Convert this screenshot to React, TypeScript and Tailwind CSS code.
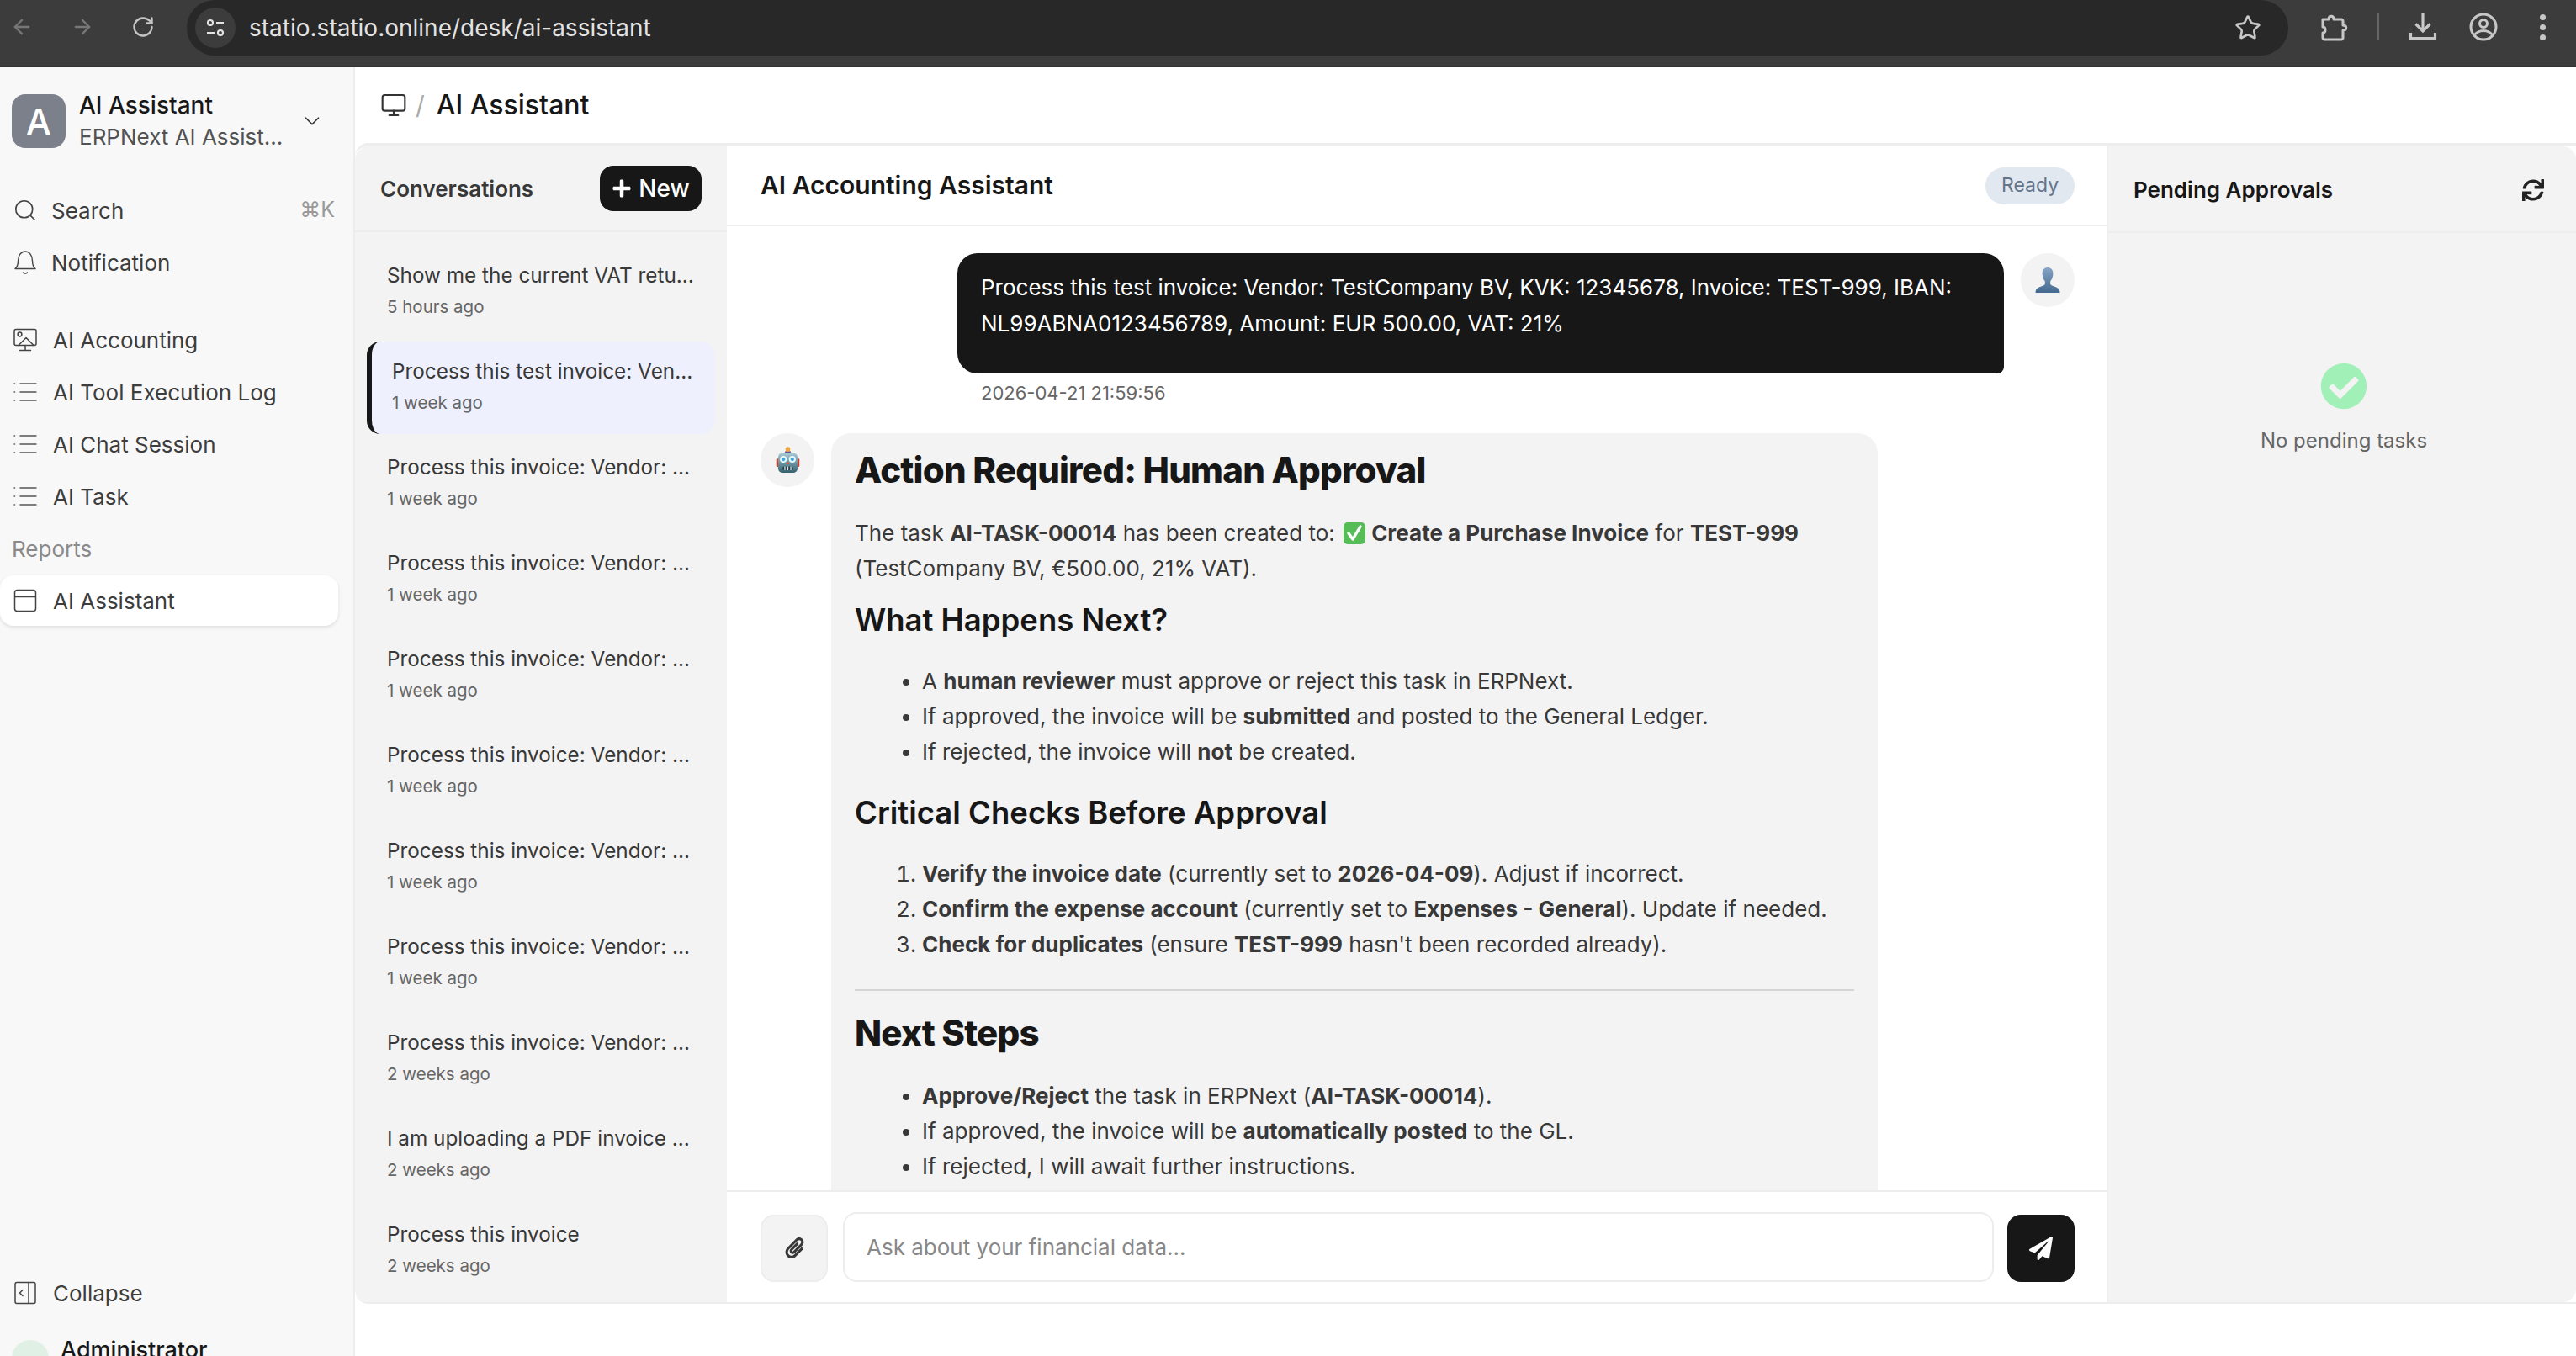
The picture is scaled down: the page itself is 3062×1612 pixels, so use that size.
import React from "react";
import { ArrowLeft, ArrowRight, RotateCw, Star, Search, ChevronDown, Monitor } from "lucide-react";
import { FaPaperclip, FaPaperPlane, FaPlus, FaSync, FaCheckCircle } from "react-icons/fa";

const conversations = [
  { title: "Show me the current VAT return status", time: "5 hours ago" },
  { title: "Process this test invoice: Vendor: TestCompany", time: "1 week ago", active: true },
  { title: "Process this invoice: Vendor: Manufacturing BV", time: "1 week ago" },
  { title: "Process this invoice: Vendor: Manufacturing BV", time: "1 week ago" },
  { title: "Process this invoice: Vendor: Manufacturing BV", time: "1 week ago" },
  { title: "Process this invoice: Vendor: Manufacturing BV", time: "1 week ago" },
  { title: "Process this invoice: Vendor: Manufacturing BV", time: "1 week ago" },
  { title: "Process this invoice: Vendor: Manufacturing BV", time: "1 week ago" },
  { title: "Process this invoice: Vendor: Manufacturing BV", time: "2 weeks ago" },
  { title: "I am uploading a PDF invoice with details", time: "2 weeks ago" },
  { title: "Process this invoice", time: "2 weeks ago" },
];

function ListIcon() {
  return (
    <svg width="30" height="28" viewBox="0 0 30 28" fill="none" stroke="#555" strokeWidth="1.4" strokeLinecap="round">
      <path d="M9 4h19M9 14h19M9 24h19M2 4h.6M2 14h.6M2 24h.6" />
    </svg>
  );
}

function BellIcon() {
  return (
    <svg width="28" height="30" viewBox="0 0 28 30" fill="none" stroke="#444" strokeWidth="1.4" strokeLinecap="round" strokeLinejoin="round">
      <path d="M2 22.500c2.500-2 3.500-4.500 3.500-9.500C5.500 6.500 9 2 14 2s8.500 4.500 8.500 11c0 5 1 7.500 3.500 9.500z" />
      <path d="M11.500 27c1.200 1.400 3.800 1.400 5 0" />
    </svg>
  );
}

function AccountingIcon() {
  return (
    <svg width="30" height="28" viewBox="0 0 30 28" fill="none" stroke="#444" strokeWidth="1.5" strokeLinejoin="round" strokeLinecap="round">
      <rect x="2" y="1.500" width="26" height="19" rx="2" />
      <circle cx="8.500" cy="7.500" r="2.400" />
      <path d="M7 20.500l9-9 9 9M15 20.500v5.500M8.500 26.500h13" />
    </svg>
  );
}

function ReportIcon() {
  return (
    <svg width="28" height="28" viewBox="0 0 28 28" fill="none" stroke="#444" strokeWidth="1.5">
      <rect x="1.500" y="1.500" width="25" height="25" rx="3" />
      <path d="M1.500 9.500h25" />
    </svg>
  );
}

function CollapseIcon() {
  return (
    <svg width="28" height="28" viewBox="0 0 28 28" fill="none" stroke="#444" strokeWidth="1.5" strokeLinecap="round" strokeLinejoin="round">
      <rect x="2" y="1.500" width="24" height="25" rx="2" />
      <path d="M18 1.500v25M11 10.500l-3.500 3.500 3.500 3.500" />
    </svg>
  );
}

function ExtensionIcon() {
  return (
    <svg width="34" height="36" viewBox="0 0 34 36" fill="none" stroke="#c7c7c7" strokeWidth="3" strokeLinejoin="round">
      <path d="M4 8h7c0-5 6-5 6 0h9c1 0 2 1 2 2v5c5 0 5 6 0 6v9c0 1-1 2-2 2H6c-1 0-2-1-2-2v-6c4 0 4-7 0-7z" />
    </svg>
  );
}

function DownloadIcon() {
  return (
    <svg width="34" height="34" viewBox="0 0 34 34" fill="none" stroke="#c7c7c7" strokeWidth="3.200">
      <path d="M17 1v20M8.500 13.500l8.500 8.500 8.500-8.500M2.500 24v6.500h29V24" />
    </svg>
  );
}

function ProfileIcon() {
  return (
    <svg width="34" height="34" viewBox="0 0 34 34" fill="none" stroke="#c7c7c7" strokeWidth="3">
      <circle cx="17" cy="17" r="15" />
      <circle cx="17" cy="13" r="4.500" />
      <path d="M6 27c3-4 7-5.500 11-5.500s8 1.500 11 5.500" />
    </svg>
  );
}

function UserBust() {
  return (
    <svg width="32" height="32" viewBox="0 0 32 32">
      <defs>
        <linearGradient id="bust" x1="0" y1="0" x2="0" y2="1">
          <stop offset="0" stopColor="#86a5c6" />
          <stop offset="1" stopColor="#44688f" />
        </linearGradient>
      </defs>
      <path fill="url(#bust)" d="M16 1c4 0 6.400 3 6.400 7.200 0 4-1.600 7.400-3.200 9v3c0 1.200 1 2 2.600 2.600 3.600 1.400 7.200 2.400 8.200 5.200.3 1 .5 2 .5 3H1.500c0-1 .2-2 .5-3 1-2.800 4.600-3.800 8.200-5.200 1.600-.6 2.600-1.400 2.600-2.600v-3c-1.600-1.600-3.200-5-3.200-9C9.600 4 12 1 16 1z" />
    </svg>
  );
}

function RobotFace() {
  return (
    <svg width="29" height="32" viewBox="0 0 32 36">
      <defs>
        <linearGradient id="head" x1="0" y1="0" x2="0" y2="1">
          <stop offset="0" stopColor="#a9ccd8" />
          <stop offset="1" stopColor="#33606f" />
        </linearGradient>
      </defs>
      <rect x="12" y="6" width="8" height="4" rx="1.500" fill="#6b4f9a" />
      <circle cx="16" cy="3.500" r="3.200" fill="#f0a63c" />
      <rect x="0.500" y="16" width="4" height="11" rx="1.500" fill="#c8402f" />
      <rect x="27.500" y="16" width="4" height="11" rx="1.500" fill="#c8402f" />
      <rect x="3" y="8" width="26" height="27" rx="6" fill="url(#head)" />
      <circle cx="10" cy="17" r="4.600" fill="#e6f6fb" />
      <circle cx="22" cy="17" r="4.600" fill="#e6f6fb" />
      <circle cx="10" cy="17" r="2.400" fill="#38a6d8" />
      <circle cx="22" cy="17" r="2.400" fill="#38a6d8" />
      <path d="M16 19l-2 4.500h4z" fill="#d9574a" />
      <rect x="9" y="26.500" width="14" height="5" rx="2" fill="#27414c" />
      <path d="M12 26.500v5M16 26.500v5M20 26.500v5" stroke="#dfe8ea" strokeWidth="1.400" />
    </svg>
  );
}

function CheckEmoji() {
  return (
    <svg width="26" height="28" viewBox="0 0 26 28" className="inline-block align-[-5px] ml-[3px] mr-[7px]">
      <rect x="0" y="1" width="26" height="26" rx="5" fill="#56bd56" />
      <path d="M6 14l5 7 9-15" fill="none" stroke="#fff" strokeWidth="3.400" strokeLinecap="round" strokeLinejoin="round" />
    </svg>
  );
}

function NavItem({ icon, label, trailing, tight }: { icon: React.ReactNode; label: string; trailing?: string; tight?: boolean }) {
  return (
    <div className="h-[60px] mb-[2px] flex items-center pl-[15px] pr-[22px]">
      <div className="w-[30px] flex justify-center shrink-0">{icon}</div>
      <span className={(tight ? "ml-[16px]" : "ml-[18px]") + " flex-1 text-[26px] text-[#3d3d3d]"}>{label}</span>
      {trailing && <span className="text-[25px] text-[#999]">{trailing}</span>}
    </div>
  );
}

function Sidebar() {
  return (
    <aside className="w-[422px] shrink-0 bg-[#f8f8f8] border-r-2 border-[#ededed] flex flex-col h-full relative">
      <div className="flex items-center pl-[14px] mt-[27px]">
        <div className="w-[64px] h-[64px] rounded-[16px] bg-[#7c808a] flex items-center justify-center text-white text-[42px] font-medium">A</div>
        <div className="ml-[16px] flex-1 leading-none">
          <div className="text-[28px] font-medium text-[#171717] leading-[36px]">AI Assistant</div>
          <div className="text-[26px] text-[#525252] leading-[36px] mt-[2px]">ERPNext AI Assist...</div>
        </div>
        <ChevronDown size={30} strokeWidth={1.4} className="text-[#333] mr-[34px]" />
      </div>
      <div className="mt-[39px]">
        <NavItem icon={<Search size={30} strokeWidth={1.3} className="text-[#444]" />} label="Search" trailing="⌘K" tight />
        <NavItem icon={<BellIcon />} label="Notification" tight />
      </div>
      <div className="mt-[30px]">
        <NavItem icon={<AccountingIcon />} label="AI Accounting" />
        <NavItem icon={<ListIcon />} label="AI Tool Execution Log" />
        <NavItem icon={<ListIcon />} label="AI Chat Session" />
        <NavItem icon={<ListIcon />} label="AI Task" />
      </div>
      <div className="h-[60px] flex items-center pl-[14px] text-[26px] text-[#8a8a8a]">Reports</div>
      <div className="h-[60px] w-[402px] mt-[2px] bg-white rounded-[16px] shadow-[0_2px_4px_rgba(0,0,0,0.1)] flex items-center pl-[15px]">
        <div className="w-[30px] flex justify-center"><ReportIcon /></div>
        <span className="ml-[18px] text-[26px] text-[#3d3d3d]">AI Assistant</span>
      </div>
      <div className="mt-auto">
        <NavItem icon={<CollapseIcon />} label="Collapse" />
        <div className="h-[43px] relative overflow-hidden">
          <div className="absolute left-[14px] top-[24px] w-[44px] h-[44px] rounded-full bg-[#e0f0e4]" />
          <span className="absolute left-[72px] top-[18px] text-[27px] font-medium text-[#171717] leading-[36px]">Administrator</span>
        </div>
      </div>
    </aside>
  );
}

function Chrome() {
  return (
    <div className="h-[80px] shrink-0 bg-[#3c3c3c] border-b-2 border-[#333] flex text-[#c7c7c7]">
      <div className="flex items-start pt-[18px] w-[222px] shrink-0 pl-[12px] gap-[44px]">
        <ArrowLeft size={28} strokeWidth={2} className="text-[#777]" />
        <ArrowRight size={28} strokeWidth={2} className="text-[#777]" />
        <RotateCw size={28} strokeWidth={2} />
      </div>
      <div className="h-[66px] w-[2498px] shrink-0 bg-[#282828] rounded-[33px] flex items-center pl-[10px] pr-[32px]">
        <div className="w-[48px] h-[48px] rounded-full bg-[#3c3c3c] flex items-center justify-center">
          <svg width="24" height="24" viewBox="0 0 24 24" fill="none" stroke="#e3e3e3" strokeWidth="2.200">
            <circle cx="6" cy="6" r="3" /><path d="M13 6h9M2 18h9" /><circle cx="18" cy="18" r="3" />
          </svg>
        </div>
        <span className="ml-[16px] text-[28px] text-[#e3e3e3] flex-1">statio.statio.online/desk/ai-assistant</span>
        <Star size={32} strokeWidth={2} />
      </div>
      <div className="flex items-start pt-[15px] flex-1 pl-[37px]">
        <ExtensionIcon />
        <div className="w-[2px] h-[32px] bg-[#666] ml-[35px] mt-[1px]" />
        <div className="ml-[35px]"><DownloadIcon /></div>
        <div className="ml-[38px]"><ProfileIcon /></div>
        <div className="ml-[50px] mt-[2px] flex flex-col gap-[5px]">
          <div className="w-[7px] h-[7px] rounded-full bg-[#c7c7c7]" />
          <div className="w-[7px] h-[7px] rounded-full bg-[#c7c7c7]" />
          <div className="w-[7px] h-[7px] rounded-full bg-[#c7c7c7]" />
        </div>
      </div>
    </div>
  );
}

function ConversationList() {
  return (
    <div className="w-[442px] shrink-0 bg-[#f3f3f3] rounded-l-[16px] flex flex-col overflow-hidden">
      <div className="h-[102px] shrink-0 border-b-2 border-[#ededed] flex items-center justify-between pl-[30px] pr-[30px]">
        <span className="text-[26px] font-semibold text-[#383838]">Conversations</span>
        <button className="w-[121px] h-[54px] rounded-[16px] bg-[#171717] text-white text-[28px] font-medium flex items-center justify-center gap-[8px]">
          <FaPlus size={24} />
          New
        </button>
      </div>
      <div className="pt-[16px] px-[14px]">
        {conversations.map((c, i) => (
          <div
            key={i}
            className={
              "h-[110px] mb-[4px] rounded-[16px] flex flex-col justify-center pb-[7px] " +
              (c.active ? "bg-[#eef0fd] border-l-[6px] border-[#171717] pl-[24px] pr-[20px]" : "pl-[24px] pr-[20px]")
            }
          >
            <div className="text-[24.300px] text-[#383838] truncate leading-[36px]">{c.title}</div>
            <div className="text-[20.500px] text-[#666] leading-[28px] mt-[6px]">{c.time}</div>
          </div>
        ))}
      </div>
    </div>
  );
}

function AssistantMessage() {
  return (
    <div className="flex items-start mt-[33px]">
      <div className="w-[64px] h-[64px] rounded-full bg-[#f3f3f3] flex items-center justify-center shrink-0"><RobotFace /></div>
      <div className="ml-[20px] w-[1244px] bg-[#f3f3f3] rounded-[24px] px-[28px] pt-[16px] pb-[40px] text-[26px] leading-[42px] text-[#383838]">
        <h1 className="text-[42px] tracking-[-0.8px] font-extrabold text-[#171717] leading-[56px]">Action Required: Human Approval</h1>
        <p className="mt-[26px]">
          The task <b>AI-TASK-00014</b> has been created to: <CheckEmoji /><b>Create a Purchase Invoice</b> for <b>TEST-999</b> (TestCompany BV, €500.00, 21% VAT).
        </p>
        <h2 className="mt-[16px] text-[36.500px] font-semibold text-[#171717] leading-[48px]">What Happens Next?</h2>
        <ul className="mt-[28px] pl-[80px] list-disc">
          <li>A <b>human reviewer</b> must approve or reject this task in ERPNext.</li>
          <li>If approved, the invoice will be <b>submitted</b> and posted to the General Ledger.</li>
          <li>If rejected, the invoice will <b>not</b> be created.</li>
        </ul>
        <h2 className="mt-[27px] text-[36.500px] font-semibold text-[#171717] leading-[48px]">Critical Checks Before Approval</h2>
        <ol className="mt-[28px] pl-[80px] list-decimal">
          <li><b>Verify the invoice date</b> (currently set to <b>2026-04-09</b>). Adjust if incorrect.</li>
          <li><b>Confirm the expense account</b> (currently set to <b>Expenses - General</b>). Update if needed.</li>
          <li><b>Check for duplicates</b> (ensure <b>TEST-999</b> hasn't been recorded already).</li>
        </ol>
        <hr className="mt-[32px] border-t-2 border-[#d4d4d4]" />
        <h1 className="mt-[22px] text-[42px] tracking-[-0.8px] font-extrabold text-[#171717] leading-[56px]">Next Steps</h1>
        <ul className="mt-[26px] pl-[80px] list-disc">
          <li><b>Approve/Reject</b> the task in ERPNext (<b>AI-TASK-00014</b>).</li>
          <li>If approved, the invoice will be <b>automatically posted</b> to the GL.</li>
          <li>If rejected, I will await further instructions.</li>
        </ul>
      </div>
    </div>
  );
}

function ChatPanel() {
  return (
    <div className="flex-1 min-w-0 bg-white border-r-2 border-[#ededed] flex flex-col">
      <div className="h-[95px] shrink-0 border-b-2 border-[#ededed] flex items-center justify-between pl-[40px] pr-[38px]">
        <span className="text-[30px] font-semibold text-[#171717]">AI Accounting Assistant</span>
        <span className="h-[44px] w-[106px] rounded-full bg-[#e2e8f0] text-[#64748b] text-[23px] flex items-center justify-center">Ready</span>
      </div>
      <div className="flex-1 min-h-0 overflow-hidden pl-[40px] pr-[38px] pt-[32px]">
        <div className="flex justify-end items-start">
          <div className="w-[1244px]">
            <div className="bg-[#171717] text-white rounded-[24px] rounded-br-[8px] pl-[28px] pr-[29px] pt-[19px] pb-[38px] text-[26px] leading-[43px]">
              Process this test invoice: Vendor: TestCompany BV, KVK: 12345678, Invoice: TEST-999, IBAN: NL99ABNA0123456789, Amount: EUR 500.00, VAT: 21%
            </div>
            <div className="pl-[28px] mt-[8px] text-[22px] leading-[30px] text-[#666]">2026-04-21 21:59:56</div>
          </div>
          <div className="w-[64px] h-[64px] ml-[20px] rounded-full bg-[#f3f3f3] flex items-center justify-center shrink-0"><UserBust /></div>
        </div>
        <AssistantMessage />
      </div>
      <div className="h-[133px] shrink-0 border-t-2 border-[#ededed] flex items-center pl-[40px] pr-[38px] pt-[2px] gap-[18px]">
        <button className="w-[80px] h-[80px] rounded-[16px] bg-[#f3f3f3] border-2 border-[#ededed] flex items-center justify-center text-[#383838]">
          <FaPaperclip size={25} />
        </button>
        <input
          placeholder="Ask about your financial data..."
          className="flex-1 min-w-0 h-[83px] -mt-[3px] rounded-[16px] border-2 border-[#ededed] bg-white pl-[26px] text-[26px] outline-none placeholder:text-[#888]"
        />
        <button className="w-[80px] h-[80px] -ml-[2px] rounded-[16px] bg-[#171717] flex items-center justify-center text-white">
          <FaPaperPlane size={28} />
        </button>
      </div>
    </div>
  );
}

function PendingPanel() {
  return (
    <div className="w-[556px] shrink-0 bg-[#f3f3f3] rounded-r-[16px] flex flex-col">
      <div className="h-[103px] border-b-2 border-[#ededed] flex items-center justify-between pl-[30px] pr-[38px] pt-[2px]">
        <span className="text-[26px] font-semibold text-[#171717]">Pending Approvals</span>
        <FaSync size={26} className="text-[#222]" />
      </div>
      <div className="flex flex-col items-center pt-[154px] pl-[4px]">
        <FaCheckCircle size={56} className="text-[#a0f0b8]" />
        <span className="mt-[19px] text-[24px] text-[#666]">No pending tasks</span>
      </div>
    </div>
  );
}

export default function App() {
  return (
    <div className="w-[3062px] h-[1612px] overflow-hidden flex flex-col bg-white font-['Inter',sans-serif]">
      <Chrome />
      <div className="flex-1 min-h-0 flex">
        <Sidebar />
        <div className="flex-1 min-w-0 flex flex-col">
          <div className="h-[90px] shrink-0 flex items-center pl-[30px]">
            <Monitor size={32} strokeWidth={1.6} className="text-[#333]" />
            <span className="ml-[10px] mr-[14px] text-[30px] text-[#aaa]">/</span>
            <span className="text-[32px] font-medium text-[#171717]">AI Assistant</span>
          </div>
          <div className="h-[1380px] shrink-0 flex border-t-[4px] border-b-2 border-[#ededed] rounded-l-[16px]">
            <ConversationList />
            <ChatPanel />
            <PendingPanel />
          </div>
        </div>
      </div>
    </div>
  );
}
